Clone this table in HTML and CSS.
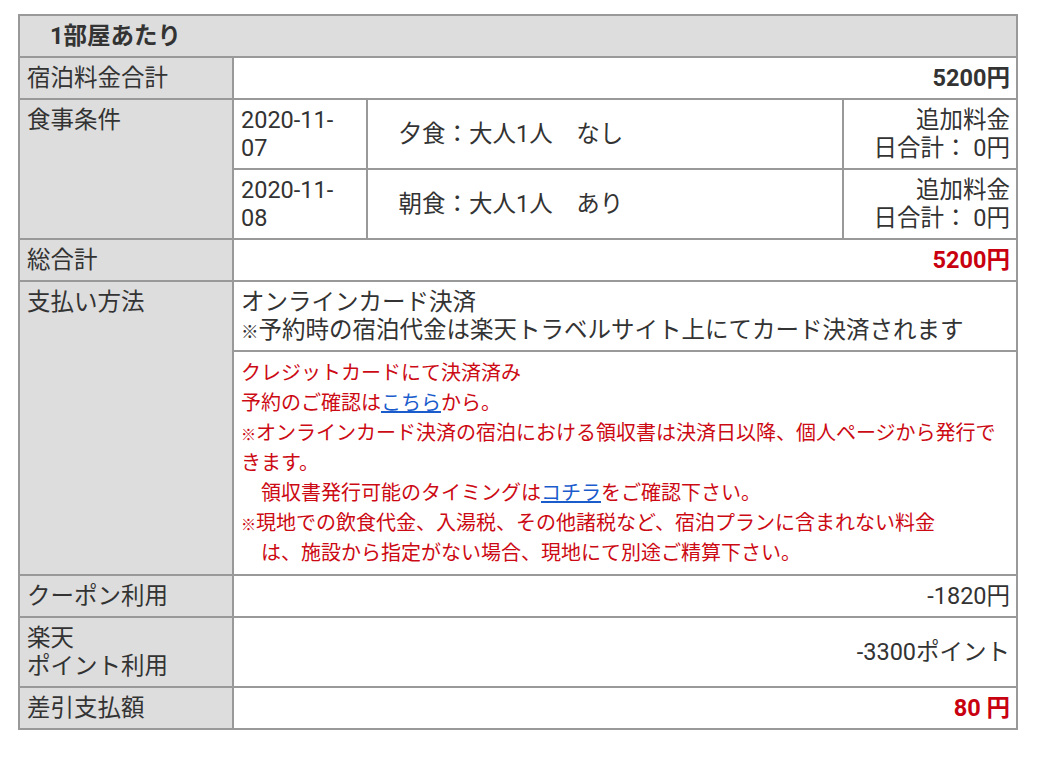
FILE: index.html
```html
<!DOCTYPE html>
<html lang="ja">
<head>
    <meta charset="UTF-8">
    <meta name="viewport" content="width=device-width, initial-scale=1.0">
    <title>料金明細</title>
    <link rel="stylesheet" href="styles.css">
</head>
<body>
    <div class="wrap">
        <table class="price-table">
            <colgroup>
                <col class="col-label">
                <col class="col-date">
                <col class="col-meal">
                <col class="col-fee">
            </colgroup>
            <tr>
                <th class="head" colspan="4">1部屋あたり</th>
            </tr>
            <tr>
                <th>宿泊料金合計</th>
                <td class="amount bold" colspan="3">5200円</td>
            </tr>
            <!-- 食事条件 -->
            <tr>
                <th rowspan="2">食事条件</th>
                <td>2020-11-<br>07</td>
                <td>　夕食：大人1人　なし</td>
                <td class="amount">追加料金<br>日合計： 0円</td>
            </tr>
            <tr>
                <td>2020-11-<br>08</td>
                <td>　朝食：大人1人　あり</td>
                <td class="amount">追加料金<br>日合計： 0円</td>
            </tr>
            <tr>
                <th>総合計</th>
                <td class="amount bold red" colspan="3">5200円</td>
            </tr>
            <!-- 支払い方法 -->
            <tr>
                <th rowspan="2">支払い方法</th>
                <td colspan="3">オンラインカード決済<br><span class="mark">※</span>予約時の宿泊代金は楽天トラベルサイト上にてカード決済されます</td>
            </tr>
            <tr>
                <td class="notice" colspan="3">
                    クレジットカードにて決済済み<br>
                    予約のご確認は<a href="#">こちら</a>から。<br>
                    <span class="mark">※</span>オンラインカード決済の宿泊における領収書は決済日以降、個人ページから発行で<br>きます。<br>
                    　領収書発行可能のタイミングは<a href="#">コチラ</a>をご確認下さい。<br>
                    <span class="mark">※</span>現地での飲食代金、入湯税、その他諸税など、宿泊プランに含まれない料金<br>
                    　は、施設から指定がない場合、現地にて別途ご精算下さい。
                </td>
            </tr>
            <tr>
                <th>クーポン利用</th>
                <td class="amount" colspan="3">-1820円</td>
            </tr>
            <tr>
                <th>楽天<br>ポイント利用</th>
                <td class="amount" colspan="3">-3300ポイント</td>
            </tr>
            <tr>
                <th>差引支払額</th>
                <td class="amount bold red" colspan="3">80 円</td>
            </tr>
        </table>
    </div>
</body>
</html>
```

FILE: styles.css
```css
body {
    margin: 0;
    background-color: #fff;
    font-family: Roboto, "Noto Sans CJK JP", sans-serif;
    color: #333;
}
.wrap {
    padding: 14px 0 0 18px;
}
.price-table {
    width: 998px;
    border-collapse: collapse;
    table-layout: fixed;
    font-size: 23.5px;
    line-height: 28px;
}
.col-label {
    width: 214px;
}
.col-date {
    width: 134px;
}
.col-meal {
    width: 476px;
}
.col-fee {
    width: 174px;
}
.price-table th,
.price-table td {
    border: 2px solid #999;
    padding: 6px 7px;
    text-align: left;
}
.price-table th {
    background-color: #ddd;
    font-weight: normal;
    vertical-align: top;
}
.price-table td {
    vertical-align: middle;
}
.price-table th.head {
    font-weight: bold;
    padding-left: 30px;
    vertical-align: middle;
}
.amount {
    text-align: right !important;
    padding-right: 6px !important;
}
.bold {
    font-weight: bold;
}
.red {
    color: #c8000f;
}
.mark {
    font-size: 0.75em;
    font-weight: bold;
    line-height: 0;
}
.notice {
    color: #cc0a14;
    font-size: 20px;
    line-height: 30px;
}
.notice a {
    color: #1a5ccc;
    text-decoration: underline;
}
```
